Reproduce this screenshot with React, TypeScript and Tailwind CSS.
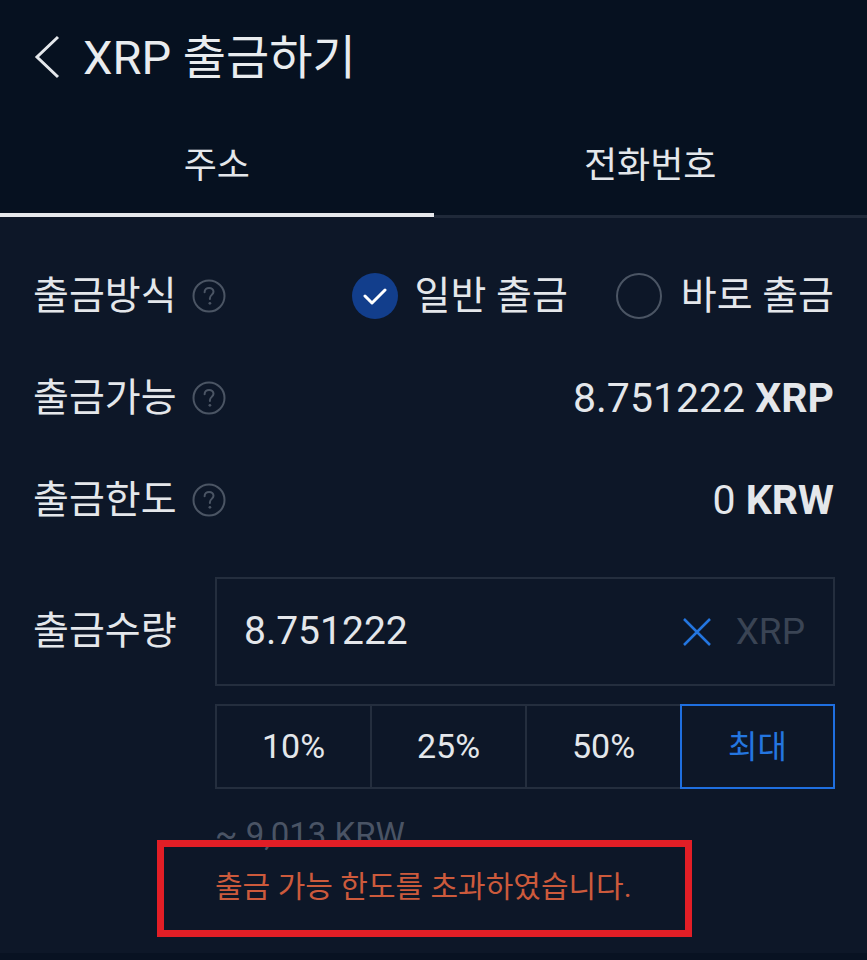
import React from 'react';

const font = { fontFamily: "Roboto, 'Noto Sans CJK KR', sans-serif" };

const HelpIcon = () => (
  <svg width="34" height="34" viewBox="0 0 34 34" className="shrink-0">
    <circle cx="17" cy="17" r="15.5" fill="none" stroke="#4b5564" strokeWidth="2" />
    <path
      d="M12.6 13.2c0-2.6 2-4.3 4.5-4.3s4.4 1.6 4.4 3.9c0 2.9-3.6 3.3-3.6 6.4v0.9"
      fill="none"
      stroke="#4b5564"
      strokeWidth="2"
      strokeLinecap="round"
    />
    <circle cx="17.9" cy="24.3" r="1.4" fill="#4b5564" />
  </svg>
);

const Label = ({ text }: { text: string }) => (
  <div className="flex items-center gap-[15px]">
    <span className="text-[39px] text-[#e4e7eb] leading-none">{text}</span>
    <HelpIcon />
  </div>
);

export default function App() {
  const pcts = ['10%', '25%', '50%'];

  return (
    <div className="relative w-[867px] h-[960px] bg-[#0d1728] overflow-hidden" style={font}>
      {/* header */}
      <div className="bg-[#061120]">
        <div className="h-[118px] flex items-center pl-[33px] pb-[4px]">
          <svg width="28" height="46" viewBox="0 0 28 46" className="mr-[22px]">
            <path d="M25 3 L4 23 L25 43" fill="none" stroke="#e4e7eb" strokeWidth="3" />
          </svg>
          <span className="text-[47px] text-[#e9ecef] leading-none">XRP 출금하기</span>
        </div>
        <div className="flex">
          <div className="flex-1 flex flex-col">
            <div className="h-[95px] flex items-center justify-center text-[36px] text-[#e4e7eb]">주소</div>
            <div className="h-[4px] bg-[#e6e8eb]" />
            <div className="h-[1px] bg-[#0d1728]" />
          </div>
          <div className="flex-1 flex flex-col">
            <div className="h-[95px] flex items-center justify-center text-[36px] text-[#e4e7eb]">전화번호</div>
            <div className="h-[2px] bg-[#061120]" />
            <div className="h-[3px] bg-[#1f2939]" />
          </div>
        </div>
      </div>

      {/* body */}
      <div className="px-[33px] pt-[27px]">
        <div className="h-[102px] flex items-center justify-between">
          <Label text="출금방식" />
          <div className="flex items-center">
            <span className="w-[46px] h-[46px] rounded-full bg-[#123e8c] flex items-center justify-center">
              <svg width="24" height="18" viewBox="0 0 24 18">
                <path d="M2 9 L9 16 L22 3" fill="none" stroke="#ffffff" strokeWidth="3" strokeLinecap="round" strokeLinejoin="round" />
              </svg>
            </span>
            <span className="ml-[17px] text-[39px] text-[#e4e7eb] leading-none">일반 출금</span>
            <span className="ml-[48px] w-[46px] h-[46px] rounded-full border-2 border-[#4b5564]" />
            <span className="ml-[19px] text-[39px] text-[#e4e7eb] leading-none">바로 출금</span>
          </div>
        </div>

        <div className="h-[102px] flex items-center justify-between">
          <Label text="출금가능" />
          <span className="text-[41px] text-[#e4e7eb] leading-none">
            8.751222 <b className="font-bold">XRP</b>
          </span>
        </div>

        <div className="h-[102px] flex items-center justify-between">
          <Label text="출금한도" />
          <span className="text-[41px] text-[#e4e7eb] leading-none">
            0 <b className="font-bold">KRW</b>
          </span>
        </div>

        <div className="flex mt-[26px]">
          <div className="w-[182px] h-[109px] flex items-center text-[39px] text-[#e4e7eb] leading-none">출금수량</div>
          <div className="flex-1 -mr-[1px]">
            <div className="h-[109px] border-2 border-[#242e3e] flex items-center pl-[27px] pr-[28px]">
              <span className="flex-1 text-[39px] text-[#e4e7eb] leading-none">8.751222</span>
              <svg width="30" height="30" viewBox="0 0 30 30" className="mr-[24px]">
                <path d="M2 2 L28 28 M28 2 L2 28" stroke="#2476e0" strokeWidth="2.5" />
              </svg>
              <span className="text-[37px] text-[#3a4454] leading-none">XRP</span>
            </div>
            <div className="mt-[18px] grid grid-cols-4 h-[85px]">
              {pcts.map((p) => (
                <div
                  key={p}
                  className="flex items-center justify-center text-[34px] text-[#e4e7eb] border-y-2 border-l-2 border-[#242e3e]"
                >
                  {p}
                </div>
              ))}
              <div className="flex items-center justify-center text-[32px] text-[#2476e0] border-2 border-[#1f6fe0]">최대</div>
            </div>
            <div className="mt-[29px] text-[33px] text-[#4a5465] leading-none">~ 9,013 KRW</div>
            <div className="mt-[21px] text-[30px] text-[#cc5a3c] leading-none">출금 가능 한도를 초과하였습니다.</div>
          </div>
        </div>
      </div>

      <div className="absolute left-0 right-0 bottom-0 h-[7px] bg-[#081222]" />

      {/* annotation box */}
      <div className="absolute left-[157px] top-[840px] w-[535px] h-[97px] border-[7px] border-[#e21e26]" />
    </div>
  );
}
